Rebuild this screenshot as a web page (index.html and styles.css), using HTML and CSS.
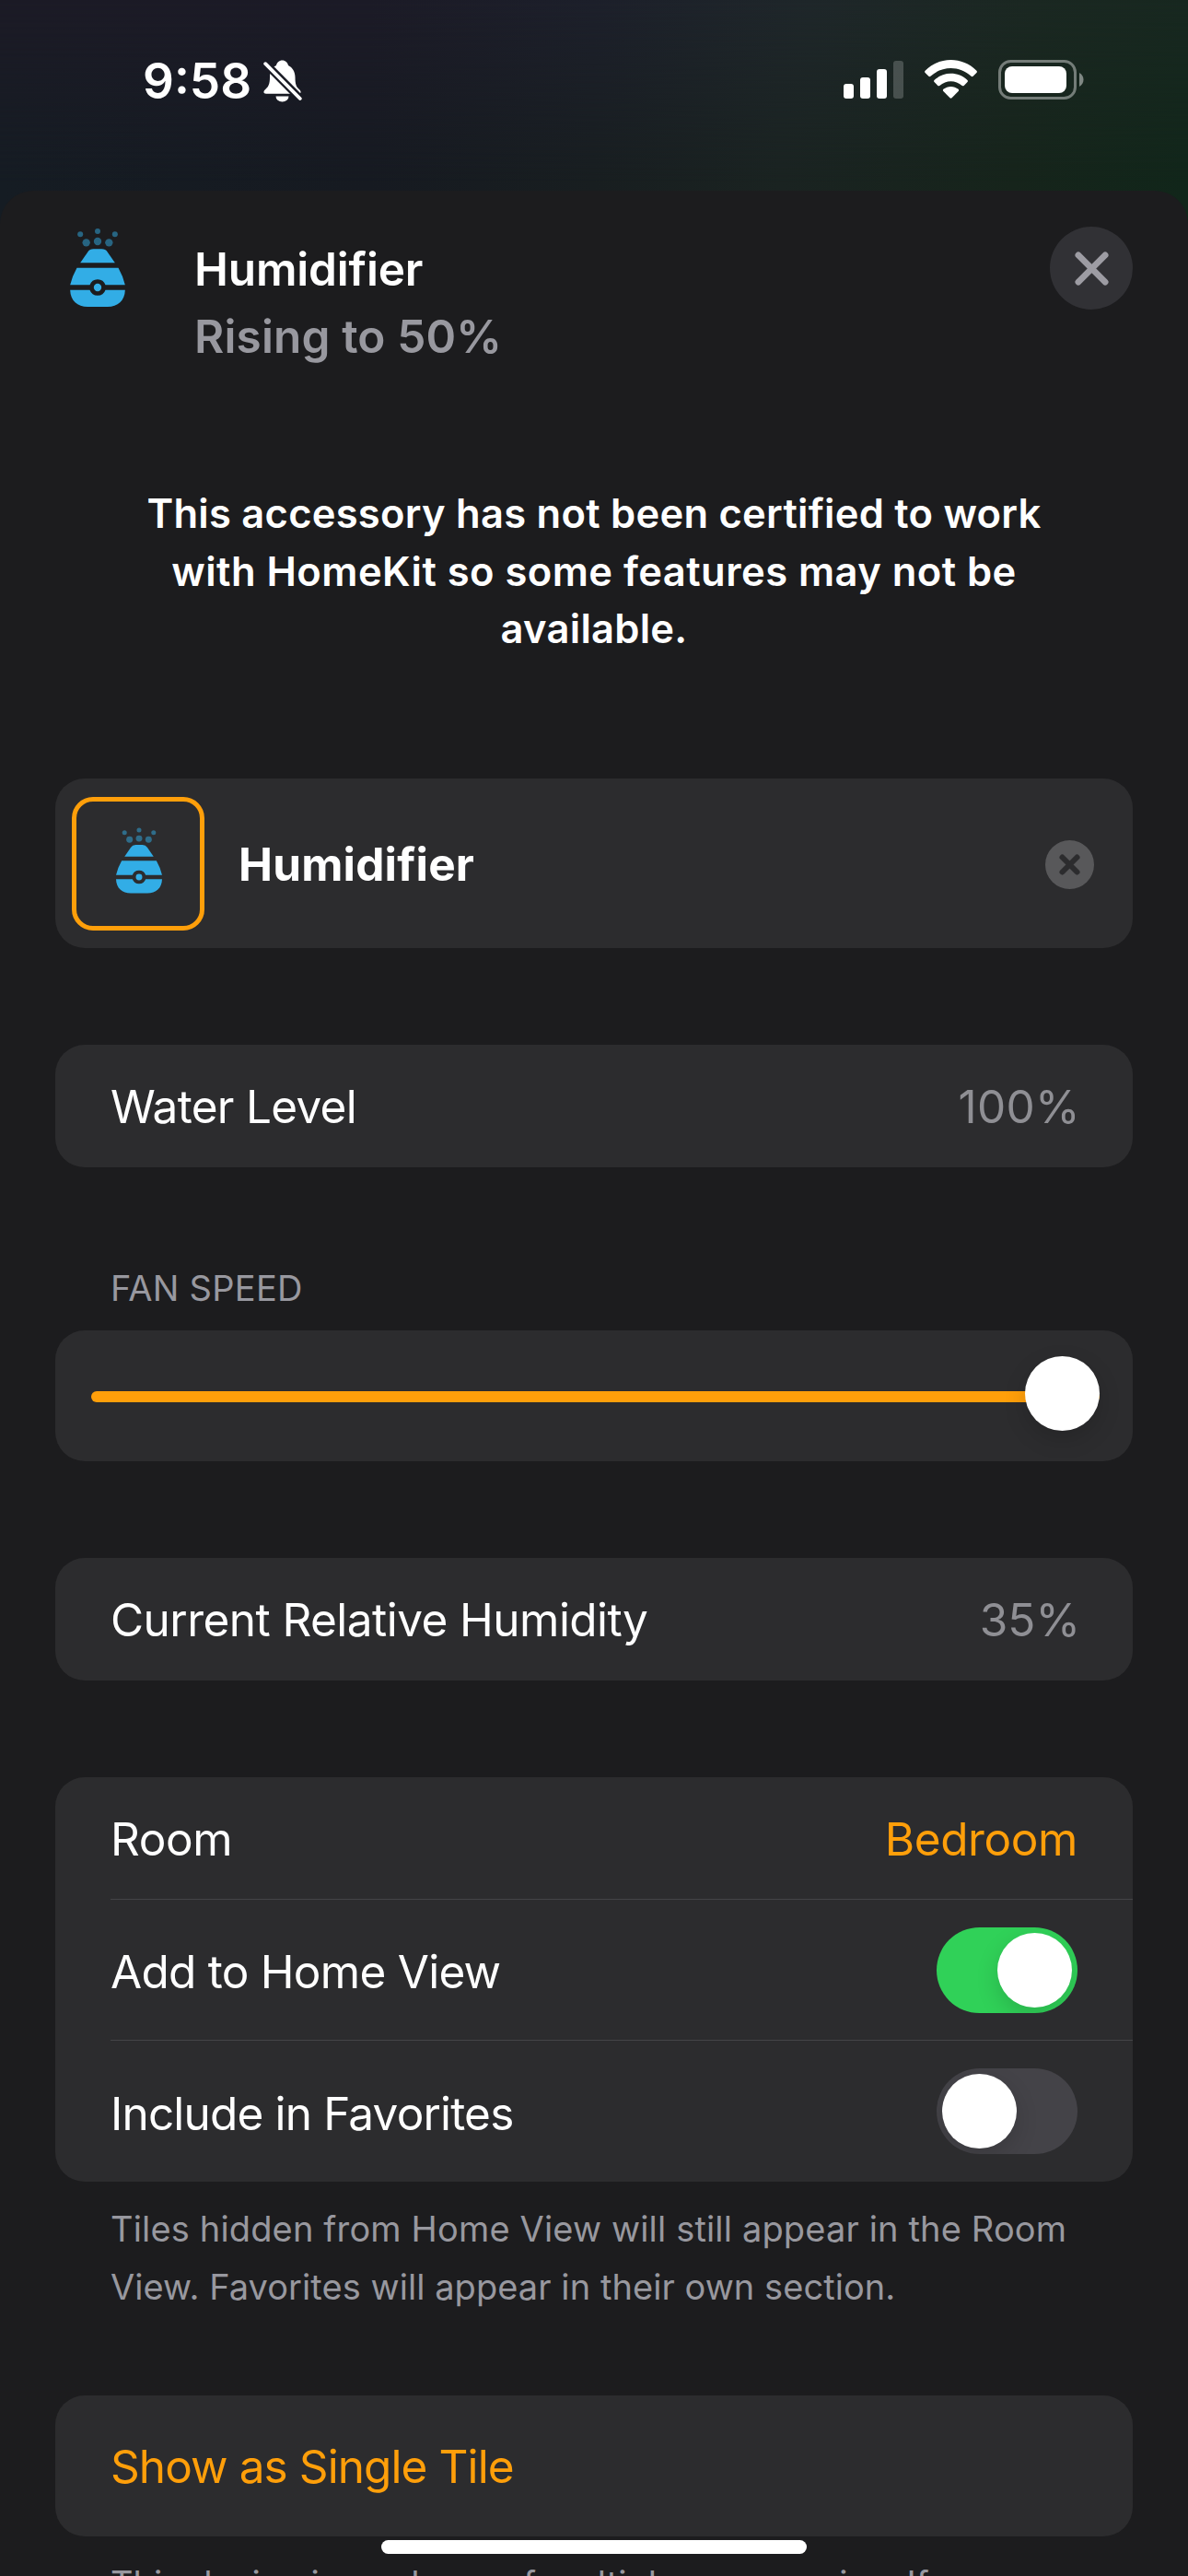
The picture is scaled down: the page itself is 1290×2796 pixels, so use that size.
FILE: index.html
```html
<!DOCTYPE html>
<html lang="en">
<head>
<meta charset="utf-8">
<title>Humidifier</title>
<link rel="stylesheet" href="styles.css">
</head>
<body>
<svg class="defs" aria-hidden="true">
  <symbol id="humidifier" viewBox="0 0 179 255">
    <g class="mist">
      <circle cx="89.500" cy="9" r="9"/><circle cx="33" cy="19" r="9"/><circle cx="146" cy="19" r="9"/>
      <circle cx="89.500" cy="42" r="12.500"/><circle cx="52.500" cy="46" r="12.500"/><circle cx="126.500" cy="46" r="12.500"/>
    </g>
    <path d="M33 112L57 77Q64 67 76 67H103Q115 67 122 77L146 112Z"/>
    <path d="M22 128H157Q172 154 179 184H115A27 27 0 0 0 64 184H0Q7 154 22 128Z"/>
    <path d="M0 200H64A27 27 0 0 0 115 200H179C178 235 155 255 122 255H57C24 255 1 235 0 200Z"/>
    <circle cx="89.500" cy="192" r="12.500"/>
  </symbol>
</svg>
<div class="screen">
  <header class="status">
    <div class="status-left">
      <span class="time">9:58</span>
      <svg class="bell" viewBox="0 0 43 46">
        <mask id="cut">
          <rect width="43" height="46" fill="#fff"/>
          <path d="M-1 .7L43 45" stroke="#000" stroke-width="8.500"/>
        </mask>
        <g mask="url(#cut)" fill="#fff">
          <path d="M20.500 .5C17 .5 14.500 3 14 6C9 8 7 13 7 19C7 26 5.500 29 2.200 32C-.5 34.500 0 36.700 3 36.700H38C41 36.700 41.500 34.500 38.800 32C35.500 29 34.500 26 34.500 19C34.500 13 31.500 8 27 6C26.500 3 24 .5 20.500 .5Z"/>
          <path d="M13.500 39.500H27.500A7 6 0 0 1 13.500 39.500Z"/>
        </g>
        <path d="M2.200 4.200L39.800 42" stroke="#fff" stroke-width="3.800" stroke-linecap="round"/>
      </svg>
    </div>
    <div class="status-right">
      <svg class="signal" viewBox="0 0 65 41">
        <g fill="#fff">
          <rect y="25" width="11" height="16" rx="3"/><rect x="18" y="18" width="11" height="23" rx="3"/><rect x="36" y="9" width="11" height="32" rx="3"/><rect x="54" width="11" height="41" rx="3" opacity=".2"/>
        </g>
      </svg>
      <svg class="wifi" viewBox="0 0 57 42">
        <g fill="#fff">
          <path d="M.6 11.800C16 -3.900 41 -3.900 56.400 11.800Q57.400 12.900 56.400 13.900L52.600 17.800Q51.600 18.700 50.600 17.800C38 5.900 19 5.900 6.400 17.800Q5.400 18.700 4.400 17.800L.6 13.900Q-.4 12.900 .6 11.800Z"/>
          <path d="M10.500 22C20.500 12.300 36.500 12.300 46.500 22Q47.400 23 46.500 24L42.700 27.900Q41.700 28.800 40.700 27.900C33.500 21.600 23.500 21.600 16.300 27.900Q15.300 28.800 14.300 27.900L10.500 24Q9.600 23 10.500 22Z"/>
          <path d="M20.400 31.800C25 27.900 32 27.900 36.600 31.800Q37.600 32.800 36.700 33.900L29.500 41.300Q28.500 42.200 27.500 41.300L20.300 33.900Q19.400 32.800 20.400 31.800Z"/>
        </g>
      </svg>
      <svg class="battery" viewBox="0 0 93 43">
        <rect x="1.500" y="1.500" width="82" height="40" rx="12" fill="none" stroke="#fff" stroke-opacity=".4" stroke-width="3"/>
        <rect x="7" y="7" width="67" height="29" rx="8" fill="#fff"/>
        <path d="M88 14C94 17 94 26 88 29Z" fill="#fff" fill-opacity=".45"/>
      </svg>
    </div>
  </header>

  <main class="sheet">
    <section class="head">
      <svg class="head-icon"><use href="#humidifier"/></svg>
      <div class="titles">
        <h1 class="title">Humidifier</h1>
        <p class="subtitle">Rising to 50%</p>
      </div>
      <button class="close" aria-label="Close">
        <svg class="close-x" viewBox="0 0 38 38"><path d="M4 4L34 34M34 4L4 34"/></svg>
      </button>
    </section>

    <p class="warning">
      <span class="w1">This accessory has not been certified to work</span>
      <span class="w2">with HomeKit so some features may not be</span>
      <span class="w1">available.</span>
    </p>

    <section class="card name-card">
      <div class="tile"><svg class="tile-icon"><use href="#humidifier"/></svg></div>
      <span class="name">Humidifier</span>
      <svg class="clear" viewBox="0 0 53 53"><circle cx="26.500" cy="26.500" r="26.500"/><path d="M18.500 18.500L34.500 34.500M34.500 18.500L18.500 34.500"/></svg>
    </section>

    <section class="card row water">
      <span class="label level">Water Level</span><span class="value number wide">100%</span>
    </section>

    <h2 class="caption">FAN SPEED</h2>
    <section class="card fan">
      <div class="track"><span class="knob slider-knob"></span></div>
    </section>

    <section class="card row humidity">
      <span class="label">Current Relative Humidity</span><span class="value number">35%</span>
    </section>

    <section class="card group">
      <div class="row room"><span class="label mid">Room</span><span class="value link mid">Bedroom</span></div>
      <div class="row split"><span class="label low add">Add to Home View</span><span class="toggle on"><span class="knob"></span></span></div>
      <div class="row split last"><span class="label low tight">Include in Favorites</span><span class="toggle"><span class="knob"></span></span></div>
    </section>
    <p class="note">
      <span class="n1">Tiles hidden from Home View will still appear in the Room</span>
      <span>View. Favorites will appear in their own section.</span>
    </p>

    <section class="card row single"><span class="label link show">Show as Single Tile</span></section>
    <p class="note bottom"><span>This device is made up of multiple accessories. If</span></p>
  </main>
  <div class="home-bar"></div>
</div>
</body>
</html>
```
FILE: styles.css
```css
* { box-sizing: border-box; margin: 0; padding: 0; }
body { background: #1c1c1e; }
.defs { position: absolute; width: 0; height: 0; }
.screen {
  position: relative;
  display: flex;
  flex-direction: column;
  width: 1290px;
  height: 2796px;
  overflow: hidden;
  font-family: Inter, "Liberation Sans", sans-serif;
  color: #fff;
  background: linear-gradient(90deg, #1c1b26 0, #1c1b27 400px, #1d202b 645px, #1f272a 880px, #1b2822 1120px, #182820 1290px);
}
.screen::before {
  content: "";
  position: absolute;
  inset: 0 0 auto;
  height: 260px;
  background: linear-gradient(90deg, #151c23 0, #161a21 400px, #181e20 645px, #1a2321 850px, #16241b 1100px, #11261a 1290px);
  -webkit-mask-image: linear-gradient(transparent, #000 200px);
  mask-image: linear-gradient(transparent, #000 200px);
}

/* Status bar */
.status {
  position: relative;
  display: flex;
  justify-content: space-between;
  flex: none;
  height: 207px;
  padding: 65px 113px 0 155px;
}
.status-left, .status-right { display: flex; align-items: flex-start; }
.time { width: 131px; font-size: 53px; font-weight: 600; line-height: 46px; }
.bell { width: 43px; height: 46px; }
.signal { width: 65px; height: 41px; margin: 1px 23px 0 0; }
.wifi { width: 57px; height: 42px; margin-right: 23px; }
.battery { width: 93px; height: 43px; }

/* Sheet */
.sheet {
  position: relative;
  flex: 1;
  padding: 0 60px;
  background: #1c1c1e;
  border-radius: 36px 36px 0 0;
}
.head { display: flex; align-items: flex-start; height: 310px; padding-top: 39px; }
.head-icon { width: 60px; height: 85px; margin: 2px 0 0 16px; fill: #32ade6; }
.mist { opacity: .5; }
.titles { flex: 1; padding: 10px 0 0 75px; }
.title, .subtitle { font-size: 49.5px; font-weight: 600; line-height: 73px; }
.title { letter-spacing: -.17px; }
.subtitle { letter-spacing: .15px; color: #98989f; }
.close {
  display: flex;
  align-items: center;
  justify-content: center;
  width: 90px;
  height: 90px;
  border: 0;
  border-radius: 50%;
  background: #313135;
}
.close-x { width: 37px; height: 37px; fill: none; stroke: #9d9ca3; stroke-width: 7px; stroke-linecap: round; }

.warning {
  display: flex;
  flex-direction: column;
  align-items: center;
  height: 328px;
  padding-top: 9px;
  font-size: 43.5px;
  font-weight: 600;
  line-height: 62.7px;
  white-space: nowrap;
}
.w1 { letter-spacing: .26px; }
.w2 { letter-spacing: .46px; }

.card { background: #2c2c2e; border-radius: 32px; }
.name-card { display: flex; align-items: center; height: 184px; margin-bottom: 105px; padding: 0 42px 0 18px; }
.tile {
  display: flex;
  align-items: center;
  justify-content: center;
  width: 144px;
  height: 145px;
  border: 5px solid #ff9f0a;
  border-radius: 23px;
}
.tile-icon { width: 50px; height: 72px; margin: -7px 0 0 2px; fill: #32ade6; }
.name { flex: 1; padding: 2px 0 0 37px; font-size: 49.5px; font-weight: 700; letter-spacing: .2px; }
.clear { width: 53px; height: 53px; margin-top: 2px; fill: #58585a; }
.clear path { stroke: #2c2c2e; stroke-width: 6px; stroke-linecap: round; }

.row {
  display: flex;
  align-items: center;
  justify-content: space-between;
  height: 133px;
  padding: 0 60px;
  font-size: 49.5px;
  line-height: 60px;
}
.label { letter-spacing: -.55px; }
.level { letter-spacing: -.7px; }
.value { color: #8f8f94; }
.number { margin-right: -3px; }
.wide { letter-spacing: .3px; }
.link { color: #ff9f0a; }
.mid { padding-top: 1px; letter-spacing: -.4px; }
.low { padding-top: 4px; }
.add { letter-spacing: -.74px; }
.tight { letter-spacing: -.83px; }
.show { letter-spacing: -.91px; }
.water { margin-bottom: 108px; }
.caption { height: 69px; padding-left: 60px; font-size: 38px; font-weight: 400; line-height: 46px; letter-spacing: .27px; color: #98989f; }
.fan { height: 142px; margin-bottom: 105px; padding: 66px 36px 0 39px; }
.track { position: relative; height: 12px; border-radius: 6px; background: #ff9f0a; }
.knob { display: block; width: 81px; height: 81px; border-radius: 50%; background: #fff; box-shadow: 0 9px 24px rgba(0, 0, 0, .15); }
.slider-knob { position: absolute; right: 0; top: -38px; }
.humidity { margin-bottom: 105px; }

.group { height: 439px; margin-bottom: 20px; }
.group .row { height: 132px; }
.group .split {
  height: 153px;
  margin-left: 60px;
  padding-left: 0;
  border-top: 1px solid #444447;
}
.group .last { height: 154px; }
.toggle { width: 153px; height: 93px; padding: 6px; border-radius: 47px; overflow: hidden; background: #444348; }
.toggle.on { padding-left: 66px; background: #30d158; }

.note { display: flex; flex-direction: column; height: 212px; padding-left: 60px; font-size: 38px; line-height: 63px; letter-spacing: .06px; white-space: nowrap; color: #98989f; }
.note .n1 { letter-spacing: .155px; }
.single { height: 153px; margin-bottom: 20px; }
.bottom { height: auto; }

.home-bar { position: absolute; left: 414px; bottom: 24px; width: 462px; height: 15px; border-radius: 8px; background: #fff; }
```
